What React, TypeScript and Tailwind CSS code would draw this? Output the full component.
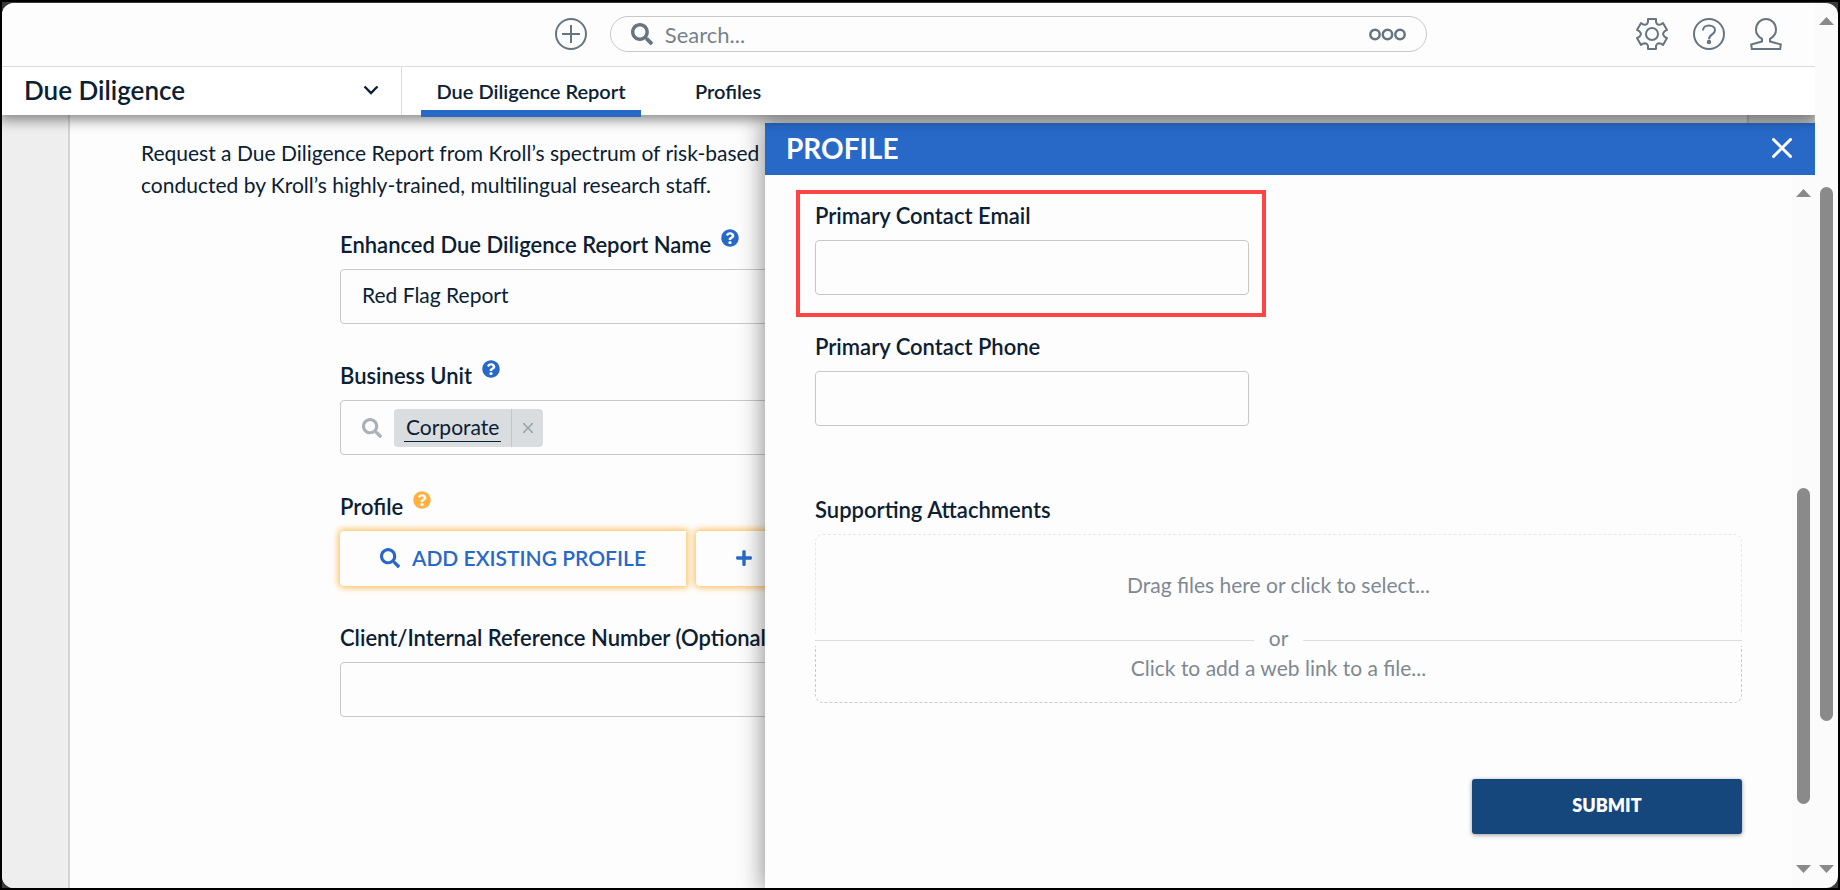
import { useId, type ReactNode } from 'react'
import { FaPlus, FaQuestionCircle, FaSearch } from 'react-icons/fa'

const FIELD =
  'block h-[55px] w-full rounded border border-[#c8c8c8] bg-[#fdfdfd] px-[21px] pb-1 text-[21px] text-[#0b2033] outline-none'

const LABEL = 'text-[22px] font-semibold leading-[24px] text-[#0b2033]'

/** Six-tooth gear outline around (16, 17), one tooth every 60 degrees. */
const GEAR_PATH =
  [0, 60, 120, 180, 240, 300]
    .flatMap((deg, i) => {
      const a = (deg * Math.PI) / 180
      const tooth = [
        [-5, -10],
        [-4, -12],
        [-4, -15],
        [4, -15],
        [4, -12],
        [5, -10],
      ]
      return tooth.map(([x, y], j) => {
        const px = 16 + x * Math.cos(a) - y * Math.sin(a)
        const py = 17 + x * Math.sin(a) + y * Math.cos(a)
        return `${i === 0 && j === 0 ? 'M' : 'L'}${px.toFixed(2)} ${py.toFixed(2)}`
      })
    })
    .join('') + 'Z'

function GearIcon() {
  return (
    <svg width="32" height="34" viewBox="0 0 32 34" fill="none" stroke="#66757f" strokeWidth="2" strokeLinejoin="round" aria-hidden>
      <path d={GEAR_PATH} />
      <circle cx="16" cy="17" r="6" />
    </svg>
  )
}

function HelpIcon() {
  return (
    <svg width="32" height="34" viewBox="0 0 32 34" fill="none" stroke="#66757f" strokeWidth="2" aria-hidden>
      <circle cx="16" cy="17" r="15" />
      <path d="M10 13.500c0-3 2.500-5 6-5s6 2 6 4.700c0 4.300-6 4-6 9" />
      <circle cx="16" cy="25" r="1.200" fill="#66757f" />
    </svg>
  )
}

function UserIcon() {
  return (
    <svg width="32" height="34" viewBox="0 0 32 34" fill="none" stroke="#66757f" strokeWidth="2" aria-hidden>
      <path d="M12 24.500v-2.700c-3.500-1.800-6-5-6-9C6 6.500 10.500 2 16 2s10 4.500 10 10.800c0 4-2.500 7.200-6 9v2.700l10.800 3-.6 4.500H1.800l-.6-4.500z" />
    </svg>
  )
}

function PlusCircle() {
  return (
    <svg width="34" height="34" viewBox="0 0 34 34" fill="none" stroke="#66757f" strokeWidth="2" aria-hidden>
      <circle cx="17" cy="17" r="15" />
      <path d="M8 17h18M17 8v18" />
    </svg>
  )
}

function Arrow({ up }: { up?: boolean }) {
  return (
    <svg width="15" height="8" viewBox="0 0 15 8" fill="#8a8a8a" className="shrink-0" aria-hidden>
      <path d={up ? 'M0 8 7.500 0 15 8z' : 'M0 0h15L7.500 8z'} />
    </svg>
  )
}

function Field({
  label,
  hint,
  children,
}: {
  label: string
  hint?: 'blue' | 'amber'
  children: (id: string) => ReactNode
}) {
  const id = useId()
  return (
    <div>
      <div className="mb-3 flex h-7 items-end gap-2.5">
        <label htmlFor={id} className={LABEL}>
          {label}
        </label>
        {hint && (
          <FaQuestionCircle
            size={18}
            aria-hidden
            className={`self-start ${hint === 'blue' ? 'text-[#2869c8]' : 'text-[#ffb03f]'}`}
          />
        )}
      </div>
      {children(id)}
    </div>
  )
}

function TopBar() {
  return (
    <header className="relative z-30 flex h-[64px] items-center border-b border-[#d9dce0] bg-[#fdfdfd] pr-[33px] pb-px">
      <div className="w-[31%]" />
      <button type="button" aria-label="Create">
        <PlusCircle />
      </button>
      <div className="ml-[22px] flex h-[36px] flex-1 items-center rounded-full border border-[#c8c8c8] px-5">
        <FaSearch size={22} className="text-[#66757f]" aria-hidden />
        <input
          aria-label="Search"
          placeholder="Search..."
          className="ml-3 h-full flex-1 bg-transparent text-[22px] text-[#0b2033] outline-none placeholder:text-[#76828b]"
        />
        <button type="button" aria-label="Search options">
          <svg width="37" height="13" viewBox="0 0 37 13" fill="none" stroke="#66757f" strokeWidth="2.500" aria-hidden>
            <circle cx="6" cy="6.500" r="4.700" />
            <circle cx="18.500" cy="6.500" r="4.700" />
            <circle cx="31" cy="6.500" r="4.700" />
          </svg>
        </button>
      </div>
      <div className="flex w-[355px] items-center justify-end gap-[25px]">
        <button type="button" aria-label="Settings"><GearIcon /></button>
        <button type="button" aria-label="Help"><HelpIcon /></button>
        <button type="button" aria-label="Account"><UserIcon /></button>
      </div>
    </header>
  )
}

function NavBar() {
  return (
    <nav className="relative z-20 flex h-[48px] bg-white text-[#0b2033] shadow-[0_2px_12px_3px_rgba(0,0,0,0.45)]">
      <button
        type="button"
        className="flex w-[400px] items-center justify-between border-r border-[#d9dce0] px-[22px] pb-0.5 text-[26px] font-semibold"
      >
        Due Diligence
        <svg width="16" height="10" viewBox="0 0 16 10" fill="none" stroke="#0b2033" strokeWidth="2.400" aria-hidden>
          <path d="M1.500 1.500 8 8l6.500-6.500" />
        </svg>
      </button>
      <a href="#report" className="relative ml-[19px] flex w-[220px] items-center justify-center text-[20px] font-semibold">
        Due Diligence Report
        <span className="absolute inset-x-0 -bottom-[2px] h-[7px] bg-[#2869c8]" />
      </a>
      <a href="#profiles" className="ml-[54px] flex items-center text-[20px] font-semibold">
        Profiles
      </a>
    </nav>
  )
}

function ReportForm() {
  return (
    <main className="mx-[66px] flex-1 border-x-2 border-[#d4d4d4] bg-[#fdfdfd] px-[71px] pt-[22px]">
      <p className="text-[21px] leading-[32px] text-[#0b2033]">
        Request a Due Diligence Report from Kroll’s spectrum of risk-based
        <br />
        conducted by Kroll’s highly-trained, multilingual research staff.
      </p>
      <form className="mx-auto mt-7 flex max-w-[1137px] flex-col gap-9">
        <Field label="Enhanced Due Diligence Report Name" hint="blue">
          {(id) => <input id={id} defaultValue="Red Flag Report" className={FIELD} />}
        </Field>
        <Field label="Business Unit" hint="blue">
          {(id) => (
            <div className="flex h-[55px] items-center rounded border border-[#c8c8c8] px-[21px]">
              <FaSearch size={20} className="text-[#a9b0b6]" aria-hidden />
              <div className="ml-3 flex h-[38px] items-center rounded bg-[#d9dde0]">
                <span className="mx-2.5 border-b border-[#0b2033] px-0.5 pb-0.5 text-[21px] leading-[25px] text-[#0b2033]">
                  Corporate
                </span>
                <button
                  type="button"
                  aria-label="Remove Corporate"
                  className="flex h-full w-8 items-center justify-center border-l border-[#c3c8cc]"
                >
                  <svg width="10" height="10" viewBox="0 0 10 10" stroke="#98a1a8" strokeWidth="1.500" aria-hidden>
                    <path d="m0 0 10 10M10 0 0 10" />
                  </svg>
                </button>
              </div>
              <input id={id} className="h-full flex-1 bg-transparent outline-none" />
            </div>
          )}
        </Field>
        <Field label="Profile" hint="amber">
          {(id) => (
            <div className="flex gap-2.5 text-[21px] font-semibold text-[#2869c8]">
              <button
                id={id}
                type="button"
                className="flex h-[55px] w-[346px] items-center justify-center gap-3 rounded-l bg-[#fdfdfd] pb-0.5 shadow-[0_0_6px_2px_#ffc164]"
              >
                <FaSearch size={20} aria-hidden />
                ADD EXISTING PROFILE
              </button>
              <button
                type="button"
                aria-label="Create new profile"
                className="flex h-[55px] w-[346px] items-center rounded bg-[#fdfdfd] pb-0.5 pl-[39px] shadow-[0_0_6px_2px_#ffc164]"
              >
                <FaPlus size={18} aria-hidden />
              </button>
            </div>
          )}
        </Field>
        <Field label="Client/Internal Reference Number (Optional)">
          {(id) => <input id={id} className={FIELD} />}
        </Field>
      </form>
    </main>
  )
}

function ProfilePanel() {
  return (
    <aside className="absolute top-[8px] right-0 bottom-0 left-[763px] z-10 flex flex-col bg-[#fdfdfd] shadow-[0_0_22px_3px_rgba(0,0,0,0.4)]">
      <div className="flex h-[52px] shrink-0 items-center justify-between bg-[#2869c8] pr-[23px] pb-0.5 pl-[21px] text-white">
        <h2 className="text-[28px] font-bold">PROFILE</h2>
        <button type="button" aria-label="Close">
          <svg width="20" height="20" viewBox="0 0 20 20" stroke="#fff" strokeWidth="3" strokeLinecap="round" aria-hidden>
            <path d="m1.500 1.500 17 17M18.500 1.500l-17 17" />
          </svg>
        </button>
      </div>
      <div className="flex min-h-0 flex-1">
        <div className="flex-1 pr-[50px] pl-[31px]">
          <div className="mt-[15px] w-[470px] border-4 border-[#ff4444] pt-[6px] pr-[13px] pb-[18px] pl-[15px]">
            <Field label="Primary Contact Email">
              {(id) => <input id={id} type="email" className={FIELD} />}
            </Field>
          </div>
          <div className="pl-[19px]">
            <div className="mt-[14px] w-[434px]">
              <Field label="Primary Contact Phone">
                {(id) => <input id={id} type="tel" className={FIELD} />}
              </Field>
            </div>
            <h3 className={`${LABEL} mt-[72px]`}>Supporting Attachments</h3>
            <div className="mt-3 text-center text-[21px] text-[#7d8992]">
              <button type="button" className="block h-[100px] w-full rounded-t-lg border border-b-0 border-dashed border-[#e6e8ea]">
                Drag files here or click to select...
              </button>
              <div className="flex h-3 items-center gap-[15px]">
                <span className="h-px flex-1 bg-[#d9dde0]" />
                <span className="pb-1">or</span>
                <span className="h-px flex-1 bg-[#d9dde0]" />
              </div>
              <button type="button" className="block h-[57px] w-full rounded-b-lg border border-t-0 border-dashed border-[#c8cbce] pb-3">
                Click to add a web link to a file...
              </button>
            </div>
            <div className="mt-[76px] flex justify-end">
              <button
                type="submit"
                className="h-[55px] w-[270px] rounded-[3px] bg-[#15477d] pb-0.5 text-[18px] font-extrabold text-white shadow-[0_1px_4px_rgba(0,0,0,0.4)]"
              >
                SUBMIT
              </button>
            </div>
          </div>
        </div>
        <div className="flex w-[23px] flex-col items-center bg-[#fbfbfb] pt-[14px] pb-[15px]" aria-hidden>
          <Arrow up />
          <div className="flex w-[13px] flex-1 flex-col">
            <div className="flex-[291]" />
            <div className="flex-[317] rounded-full bg-[#8a8a8a]" />
            <div className="flex-[61]" />
          </div>
          <Arrow />
        </div>
      </div>
    </aside>
  )
}

export default function App() {
  return (
    <div className="h-screen bg-black px-[2px] pt-[2px] pb-[2px] font-[Lato,sans-serif]">
      <div className="h-full bg-[#3a3a3a] pt-px">
        <div className="flex h-full overflow-hidden rounded-xl bg-[#fbfbfb]">
          <div className="flex min-w-0 flex-1 flex-col overflow-hidden">
            <TopBar />
            <NavBar />
            <div className="relative flex min-h-0 flex-1 bg-[#eee]">
              <ReportForm />
              <ProfilePanel />
            </div>
          </div>
          <div className="flex w-[23px] flex-col items-center pt-[14px] pb-[15px]" aria-hidden>
            <Arrow up />
            <div className="flex w-[13px] flex-1 flex-col">
              <div className="flex-[162]" />
              <div className="flex-[535] rounded-full bg-[#8a8a8a]" />
              <div className="flex-[144]" />
            </div>
            <Arrow />
          </div>
        </div>
      </div>
    </div>
  )
}
